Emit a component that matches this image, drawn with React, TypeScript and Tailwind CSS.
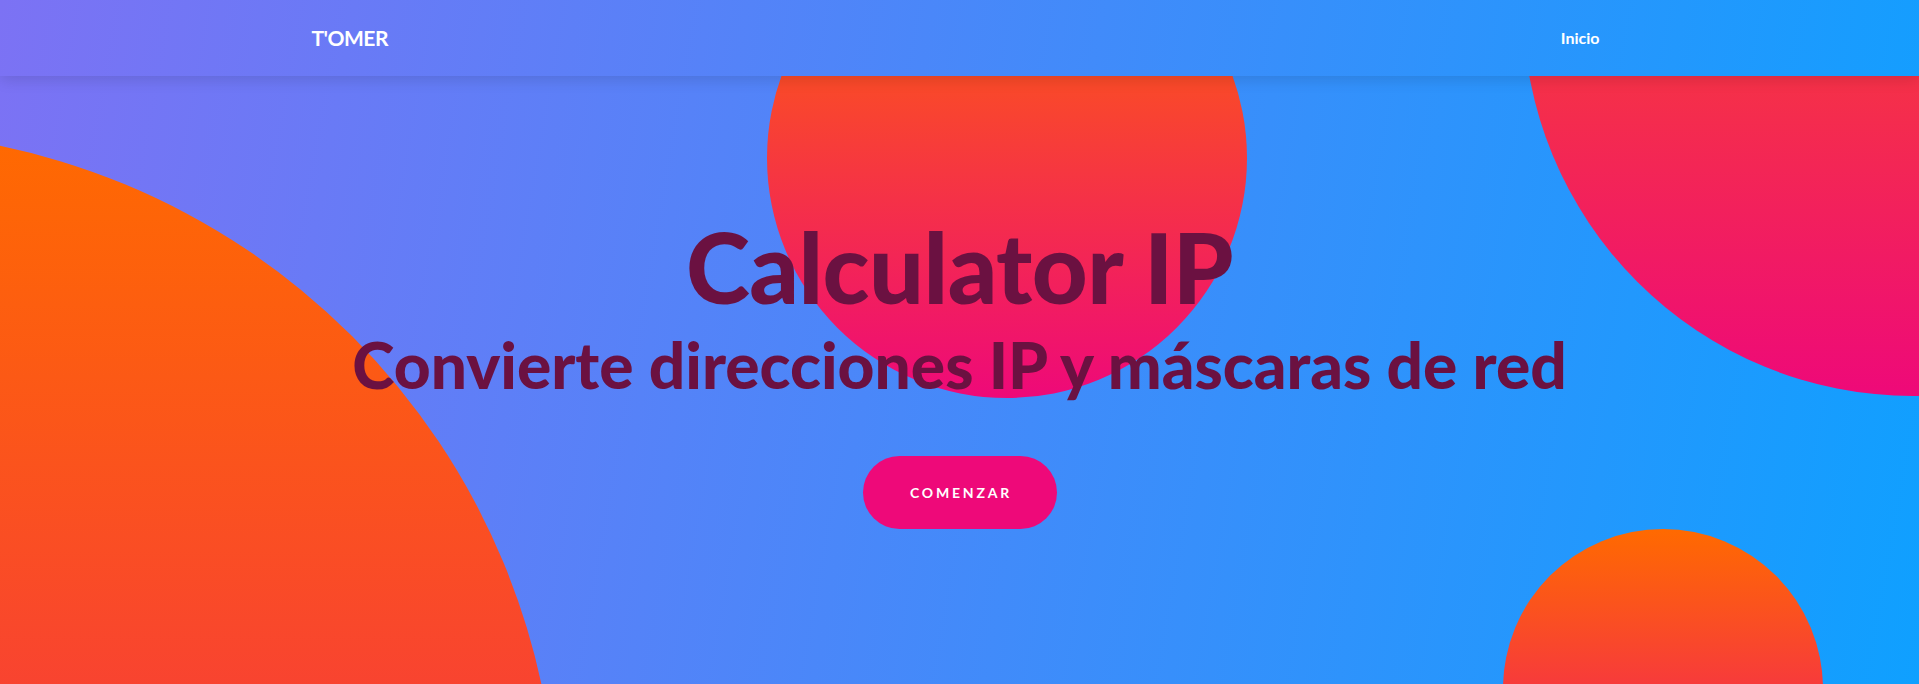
const Circle = ({ className }: { className: string }) => (
  <div
    className={`absolute rounded-full bg-[linear-gradient(to_bottom,#ff6a00,#ee0979)] ${className}`}
  />
)

const App = () => {
  return (
    <div className="relative h-[684px] w-full overflow-hidden bg-[linear-gradient(100deg,#7c72f4,#0fa0ff)] font-['Lato',sans-serif]">
      <nav className="relative z-10 h-[76px] shadow-[0_4px_14px_rgba(0,0,0,0.12)]">
        <div className="mx-auto flex h-full w-[1300px] items-center justify-between px-[2px]">
          <a href="#" className="text-[21px] font-bold tracking-[-0.5px] text-white">
            T'OMER
          </a>
          <ul className="flex items-center pr-[8px]">
            <li>
              <a href="#" className="text-[16px] font-bold text-white">
                Inicio
              </a>
            </li>
          </ul>
        </div>
      </nav>

      <section className="relative h-[608px] overflow-hidden">
        {/* decorative circles */}
        <Circle className="left-[-843px] top-[55px] h-[1400px] w-[1400px]" />
        <Circle className="left-[767px] top-[-158px] h-[480px] w-[480px]" />
        <Circle className="left-[1523px] top-[-460px] h-[780px] w-[780px]" />
        <Circle className="left-[1503px] top-[453px] h-[320px] w-[320px]" />

        <div className="relative flex flex-col items-center pt-[142px] text-center text-[#6b1141]">
          <h1 className="text-[97px] font-black leading-none tracking-[-0.5px]">Calculator IP</h1>
          <h2 className="mt-[18px] text-[64px] font-black leading-none">
            Convierte direcciones IP y máscaras de red
          </h2>
          <button className="mt-[59px] h-[73px] w-[194px] rounded-full bg-[#ee0979] pl-[3px] text-[14px] font-bold tracking-[0.2em] text-white">
            COMENZAR
          </button>
        </div>
      </section>
    </div>
  )
}

export default App
